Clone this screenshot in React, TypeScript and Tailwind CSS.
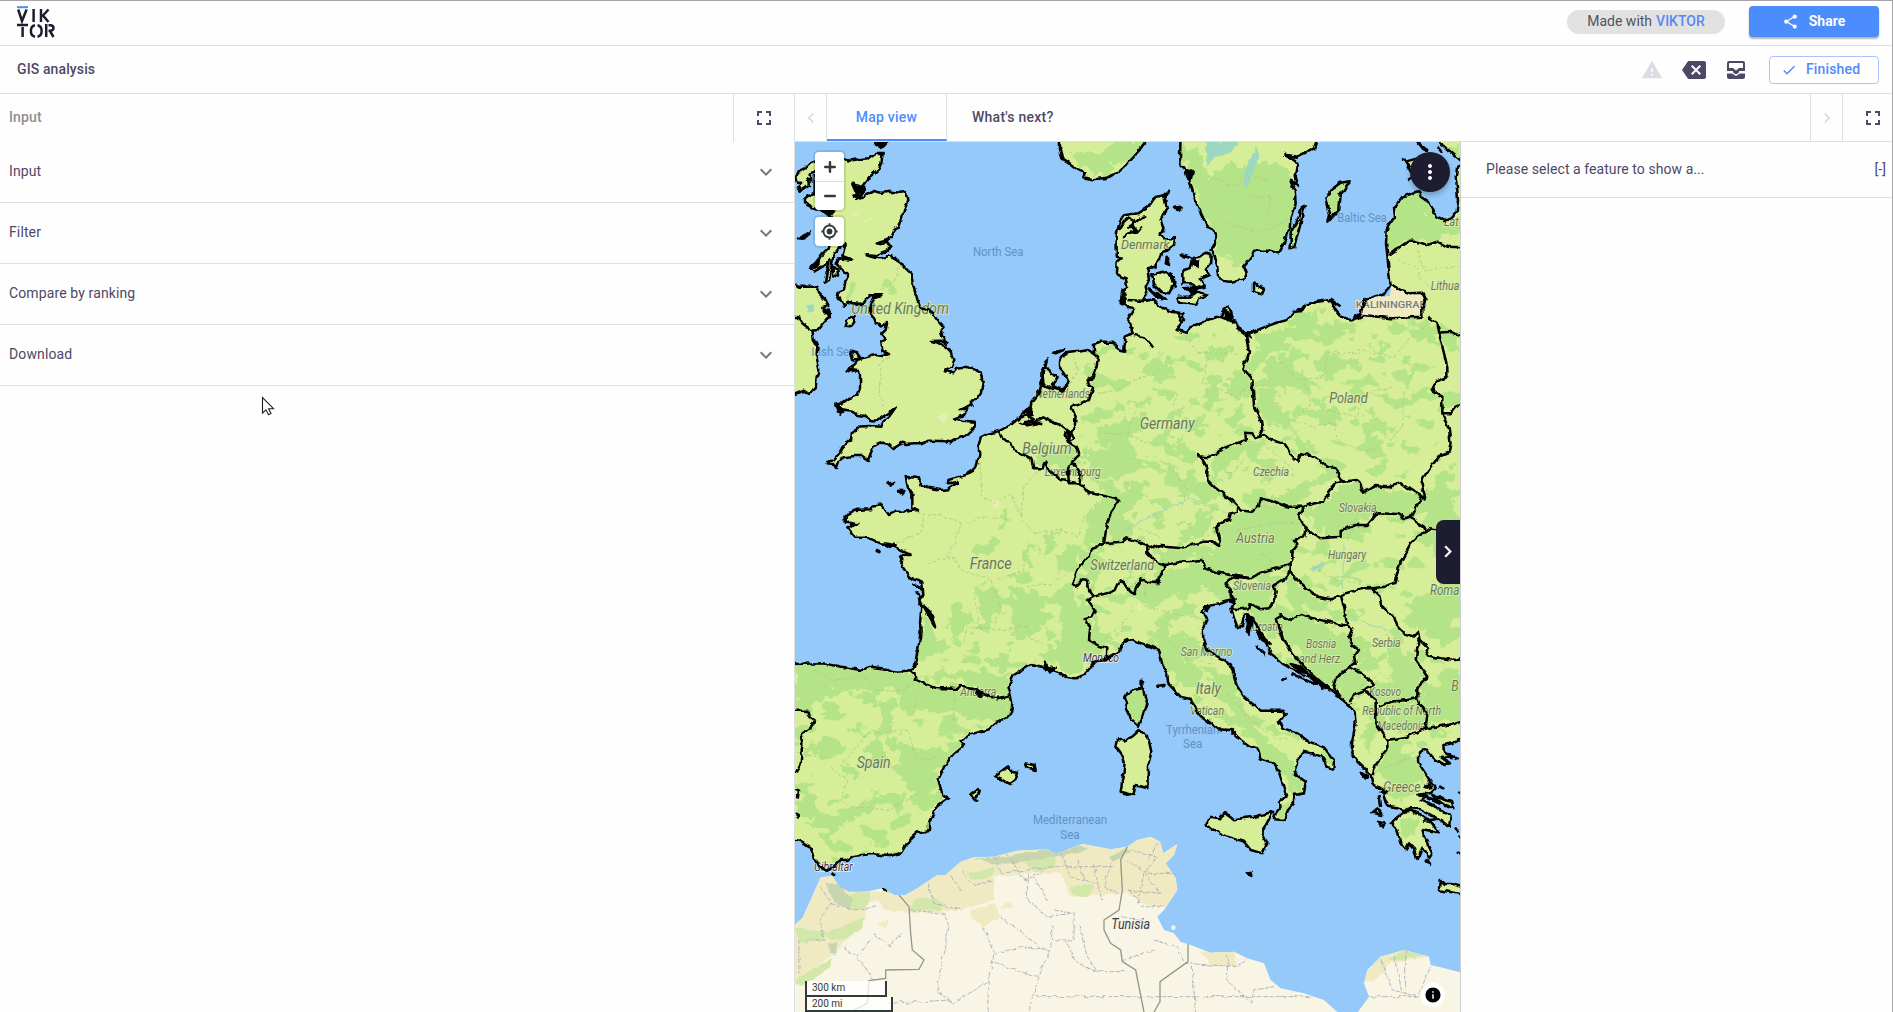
import React from "react";
import { MdShare, MdWarning, MdBackspace, MdFullscreen, MdCheck, MdExpandMore, MdChevronLeft, MdChevronRight, MdMoreVert, MdInfo } from "react-icons/md";

const EUROPE =
  "M2010,70 L1990,80 1985,110 1990,150 1992,185 1988,212 1970,235 1950,243 1925,228 1915,205 1908,190 1880,170 1875,152 1850,162 1825,170 1810,190 1800,205 1803,230 1785,255 1778,270 1776,310 1780,345 1783,380 1790,435 1770,462 1712,480 1700,520 1675,542 1640,530 1625,512 1612,485 1640,500 1612,480 1570,485 1535,495 1525,510 1500,512 1480,540 1450,548 1410,562 1370,578 1350,575 1335,568 1325,545 1290,535 1315,540 1312,515 1300,500 1283,515 1285,535 1270,530 1240,540 1230,548 1200,555 1190,560 1180,578 1145,570 1170,540 1165,520 1130,515 1090,495 1080,478 1045,483 1060,460 1055,440 1065,420 1060,385 1085,380 1085,370 1100,355 1105,335 1120,332 1140,315 1143,295 1110,295 1100,285 1108,265 1100,240 1118,205 1112,170 1125,152 1108,166 1085,170 1062,200 1030,220 990,226 978,245 968,285 968,345 980,355 968,365 966,400 982,410 995,415 1000,440 985,450 980,490 1000,500 1020,505 1000,540 1010,550 1015,580 995,590 990,635 970,630 958,605 920,605 900,612 900,640 880,630 850,635 815,640 795,655 795,680 808,695 825,725 805,748 780,740 775,730 788,712 770,700 758,680 748,685 742,735 732,760 712,785 710,800 690,815 680,830 650,855 615,873 580,882 560,892 554,915 556,945 548,975 540,990 520,1003 490,1012 463,1020 462,1030 490,1026 460,1048 440,1050 405,1043 380,1035 375,1015 335,1010 342,1040 355,1060 355,1105 372,1110 325,1115 305,1115 285,1125 262,1093 235,1097 228,1108 180,1110 155,1125 155,1145 190,1150 160,1165 180,1190 215,1190 260,1210 300,1220 320,1230 350,1245 320,1245 325,1260 322,1275 345,1310 385,1330 388,1365 375,1380 382,1400 378,1450 380,1475 372,1530 365,1565 355,1590 310,1595 285,1588 230,1580 200,1590 130,1578 85,1570 -10,1572 -10,2095 25,2105 50,2122 55,2140 62,2165 80,2180 100,2192 120,2180 140,2160 160,2160 178,2148 230,2142 285,2148 320,2140 345,2100 370,2078 405,2070 405,2050 425,2005 465,1975 445,1962 433,1920 450,1880 480,1840 510,1815 500,1805 520,1785 585,1768 600,1752 650,1725 655,1690 650,1665 643,1640 660,1605 710,1572 750,1582 790,1595 820,1612 845,1615 870,1605 905,1565 940,1555 975,1535 990,1503 1010,1498 1060,1515 1095,1530 1105,1575 1120,1600 1122,1630 1155,1665 1165,1675 1190,1680 1220,1728 1270,1768 1310,1770 1340,1800 1360,1815 1390,1825 1400,1855 1440,1870 1455,1900 1465,1930 1478,1970 1455,1985 1460,2000 1445,2020 1440,2038 1470,2040 1482,2010 1500,1990 1500,1965 1530,1960 1535,1925 1500,1900 1510,1865 1530,1835 1550,1840 1585,1850 1600,1880 1618,1888 1620,1860 1600,1835 1590,1822 1545,1805 1510,1780 1470,1765 1455,1745 1475,1722 1465,1712 1400,1712 1350,1670 1330,1640 1310,1575 1280,1555 1240,1530 1228,1495 1226,1470 1240,1440 1225,1415 1240,1395 1275,1390 1300,1380 1325,1378 1312,1405 1320,1435 1332,1465 1345,1450 1350,1425 1365,1420 1385,1450 1410,1495 1430,1540 1465,1570 1490,1585 1540,1600 1600,1642 1640,1675 1670,1700 1682,1720 1685,1750 1675,1800 1672,1840 1690,1865 1710,1885 1730,1905 1735,1930 1765,1950 1775,1985 1785,2000 1830,2010 1850,2005 1880,2008 1920,2030 1940,2040 1965,2060 1970,2030 1950,2015 1920,2000 1880,1980 1900,1970 1870,1965 1912,1958 1925,1945 1900,1910 1875,1870 1875,1840 1895,1825 1915,1850 1945,1875 1965,1870 1940,1850 1975,1855 1950,1835 1948,1815 1975,1810 2010,1790 Z";

const BRITAIN =
  "M62,110 L150,58 165,62 190,58 225,55 245,42 266,42 262,68 255,85 240,100 225,112 205,138 215,142 210,152 188,180 205,172 220,162 240,153 262,158 290,155 320,158 334,156 340,168 343,180 335,200 328,215 322,240 316,262 300,270 292,290 280,300 248,310 268,314 278,305 292,322 278,332 262,338 250,348 218,346 240,353 262,355 285,346 300,353 320,366 332,382 353,402 356,430 362,450 370,478 378,500 395,505 415,520 428,538 448,562 440,570 445,590 458,612 440,602 410,603 435,610 455,620 470,635 478,660 470,680 455,690 478,700 487,683 510,680 540,685 560,700 566,725 562,755 545,780 530,782 533,795 500,810 520,810 510,825 480,835 505,842 545,845 543,860 520,880 510,890 495,893 470,907 445,903 400,902 385,910 360,910 335,912 325,908 300,925 285,912 265,908 240,918 232,935 222,960 205,948 180,948 150,952 132,965 125,985 118,972 98,970 118,960 140,935 150,915 168,905 170,882 185,875 190,860 225,858 262,860 268,845 285,830 305,802 285,818 270,828 250,842 232,840 215,828 190,825 175,815 150,812 132,815 124,795 145,790 165,775 190,765 198,745 198,705 190,690 175,688 158,698 165,685 180,675 195,658 220,650 245,645 265,648 285,642 265,632 262,605 275,600 262,582 275,570 280,545 262,560 245,550 238,530 228,518 228,495 238,472 262,466 230,466 215,478 205,492 178,490 165,485 150,500 145,490 130,470 135,455 150,448 155,420 162,405 140,385 128,372 135,355 175,360 145,348 155,312 130,330 118,350 105,420 92,428 98,400 108,360 95,375 60,395 45,385 65,368 82,345 105,322 112,300 110,230 90,215 60,205 30,190 30,178 45,165 62,160 Z";

const ISLANDS = [
  "M-8,425 L15,440 40,440 70,440 75,460 95,480 103,495 85,500 105,520 108,535 90,545 70,570 55,572 60,600 70,620 68,650 76,690 68,710 65,745 45,762 30,752 -8,768 Z",
  "M3,110 L20,90 45,75 68,62 66,95 50,100 52,125 40,115 45,135 20,152 10,140 25,125 8,125 Z",
  "M798,-10 L798,30 805,55 825,68 850,88 872,100 868,112 895,118 930,115 970,100 990,82 1020,50 1040,25 1065,-10 Z",
  "M1160,-10 L1158,50 1160,75 1172,85 1180,110 1190,130 1200,170 1212,200 1228,235 1245,262 1262,280 1268,292 1262,310 1250,330 1262,345 1270,380 1272,410 1285,422 1310,425 1350,415 1358,400 1350,380 1372,350 1380,332 1425,332 1455,340 1470,310 1478,280 1490,265 1492,240 1505,190 1502,150 1490,125 1512,135 1505,110 1512,75 1500,60 1475,45 1510,50 1530,40 1560,25 1572,-10 Z",
  "M1670,124 L1655,140 1640,165 1636,205 1600,245 1605,225 1594,175 1610,150 1640,128 Z",
  "M1532,198 L1522,240 1500,322 1490,325 1490,280 1510,245 1522,205 Z",
  "M1380,430 L1410,448 1405,464 1380,455 Z",
  "M1165,390 L1190,385 1200,350 1220,345 1240,338 1250,345 1248,370 1235,390 1245,405 1220,415 1230,440 1215,445 1190,430 1165,430 Z",
  "M1075,405 L1105,395 1130,405 1138,435 1125,460 1100,455 1080,435 Z",
  "M1150,470 L1185,470 1210,455 1240,463 1215,475 1205,495 1180,492 1155,488 Z",
  "M1140,204 L1160,200 1155,210 Z",
  "M1118,350 L1125,375 1115,370 Z",
  "M1740,-10 L1930,-10 1945,15 2010,70 2010,-10 Z",
  "M1835,65 L1870,55 1890,50 1870,85 1850,95 Z",
  "M1830,2015 L1800,2040 1790,2048 1810,2070 1820,2110 1835,2130 1845,2110 1860,2125 1870,2160 1885,2120 1905,2155 1915,2140 1890,2090 1885,2070 1935,2080 1920,2060 1910,2045 1880,2025 1850,2012 Z",
  "M1240,2040 L1250,2030 1275,2035 1295,2018 1320,2038 1380,2030 1437,2015 1405,2075 1420,2110 1405,2140 1370,2130 1350,2105 1300,2090 1260,2070 1238,2055 Z",
  "M1043,1622 L1050,1660 1057,1690 1045,1730 1035,1760 1010,1735 995,1705 1000,1690 992,1675 1000,1660 1020,1650 1043,1645 Z",
  "M1037,1770 L1062,1790 1072,1835 1062,1880 1060,1945 1025,1935 1018,1965 980,1955 985,1920 992,1870 985,1845 967,1820 972,1795 990,1802 1015,1790 Z",
  "M603,1908 L640,1880 650,1892 672,1895 665,1920 648,1932 620,1915 Z",
  "M695,1870 L722,1875 725,1890 700,1882 Z",
  "M530,1962 L550,1947 557,1955 540,1975 Z",
  "M1358,2196 L1370,2196 1372,2208 Z",
  "M1935,2250 L1937,2220 1950,2232 1975,2232 2010,2242 2010,2264 Z",
  "M155,560 L160,540 182,528 180,548 168,562 Z",
  "M1915,1965 L1950,1980 1975,1985 1978,2005 1940,1990 Z",
  "M1735,2018 L1750,2005 1762,2025 Z",
  "M1752,2045 L1770,2050 1765,2062 Z",
  "M115,380 L130,385 132,410 118,405 Z",
  "M170,635 L190,640 200,655 178,662 Z",
  "M815,880 L832,875 838,895 822,905 Z",
];

const BORDERS = [
  "M-5,530 L15,532 25,550 38,560 55,572",
  "M900,640 L912,650 908,680 895,712 878,720 882,735 898,742 885,780 840,795 832,800 845,830 842,860 825,880",
  "M690,850 L720,845 745,832 770,845 800,855 820,870 825,880 822,905 845,920 855,945 835,965 822,985 822,1000 825,1030 860,1030 862,1005 850,985 835,965",
  "M615,873 L625,900 650,905 660,930 690,945 712,955 718,985 745,985 755,965 760,985 800,1020 850,1030 870,1040 885,1060 920,1065 975,1080",
  "M975,1080 L955,1110 940,1145 930,1210 895,1225 885,1245 850,1290 835,1330 845,1340 865,1318 882,1320 885,1350 900,1370",
  "M930,1210 L985,1205 1000,1195 1060,1215 1060,1240 1080,1260 1110,1275 1130,1272 1160,1265 1225,1260",
  "M900,1370 L945,1358 965,1350 980,1318 1000,1345 1020,1365 1025,1345 1040,1315 1060,1325 1090,1330 1095,1310 1110,1290 1110,1275",
  "M900,1370 L882,1380 905,1412 895,1432 872,1438 888,1465 885,1500 915,1518 940,1525 938,1555",
  "M1060,1215 L1075,1225 1100,1215 1115,1220 1160,1225 1230,1205 1260,1205 1275,1218 1280,1205 1265,1165 1275,1150 1305,1140 1310,1120 1328,1115 1330,1100",
  "M1225,1260 L1235,1285 1260,1295 1310,1305 1370,1315 1400,1298 1480,1275 1490,1270",
  "M1330,1100 L1310,1080 1260,1040 1240,1020 1240,985 1222,955 1210,948 1240,952 1270,940 1290,925 1355,900 1355,878 1375,880 1385,895 1410,885 1430,900 1470,910 1480,925 1490,945 1510,965 1520,940 1545,945 1575,960 1600,980 1625,985 1640,1020 1650,1025",
  "M1330,1100 L1345,1112 1375,1115 1395,1095 1400,1075 1440,1085 1480,1100 1530,1100 1560,1090 1590,1085 1605,1055 1625,1030 1650,1025",
  "M1650,1025 L1690,1020 1710,1058 1745,1038 1780,1042 1820,1030 1850,1050 1885,1070 1895,1075 1880,1025 1910,980 1940,945 1965,935 1970,910 1965,870 1945,820 1945,770 1912,750 1925,725 1960,710 1960,680 1940,600 1930,550 1900,530",
  "M1530,1100 L1515,1130 1535,1165 1530,1190 1500,1200 1510,1215 1495,1235 1495,1262 1490,1270",
  "M1535,1165 L1560,1185 1580,1195 1640,1190 1640,1170 1685,1155 1720,1155 1750,1120 1810,1122 1830,1135 1850,1130 1875,1085 1885,1070",
  "M1850,1130 L1865,1145 1890,1160 1895,1175 1870,1190 1850,1210 1820,1265 1800,1330 1770,1340 1735,1345 1700,1345 1640,1365 1610,1378 1570,1370 1545,1350 1510,1320 1490,1290 1490,1270",
  "M1490,1290 L1470,1322 1440,1335 1445,1355 1440,1380 1425,1405 1400,1408 1370,1390 1365,1405 1335,1408 1312,1405",
  "M1370,1315 L1320,1310 1295,1330 1310,1345 1310,1370 1325,1378",
  "M1640,1365 L1650,1400 1655,1430 1660,1458 1580,1440 1555,1435 1520,1425 1490,1440 1460,1425 1445,1435 1455,1470 1470,1500 1495,1540 1530,1580 1580,1625 1630,1665",
  "M1660,1458 L1675,1465 1665,1490 1675,1515 1695,1530 1680,1550 1685,1570 1665,1580 1650,1595 1625,1615 1618,1640 1640,1670",
  "M1665,1580 L1700,1600 1740,1630 1730,1640 1710,1650 1685,1660 1670,1690",
  "M1710,1650 L1745,1680 1745,1705 1748,1755 1780,1800 1780,1830 1760,1855 1745,1875 1735,1905",
  "M1780,1800 L1840,1790 1860,1780 1895,1765 1960,1755 2010,1740",
  "M1755,1700 L1790,1685 1840,1680 1870,1675 1875,1690 1900,1720 1895,1765",
  "M1735,1345 L1760,1370 1765,1400 1800,1430 1810,1460 1830,1480 1860,1490 1875,1475 1880,1500 1870,1520 1865,1560 1900,1610 1870,1640 1870,1675",
  "M1880,1500 L1905,1525 1895,1545 1940,1555 1985,1560 2010,1550",
  "M1895,1175 L1910,1165 1940,1170",
  "M350,1592 L370,1610 365,1620 400,1635 430,1645 455,1645 490,1648 500,1635 530,1645 560,1655 585,1670 610,1675 650,1665",
  "M-5,1712 L40,1712 45,1730 65,1745 45,1765 20,1785 25,1810 20,1870 5,1900",
  "M1020,585 L1050,592 1075,622",
  "M1080,478 L1050,483 1000,480",
  "M1785,345 L1805,330 1840,305 1870,305 1900,315 1930,305 1960,320 2010,322",
  "M1795,435 L1820,450 1850,460 1885,458 1895,480 1885,500 1885,530 1790,535 1710,525 1675,542",
  "M1935,578 L1970,575 1990,585 2010,575",
  "M1945,820 L1970,820 1990,795 2010,790",
  "M1370,578 L1355,582 1360,610 1365,640 1345,685 1375,720 1380,800 1400,840 1405,870 1395,890",
  "M5,1950 L15,1955 10,1975 M5,2020 L15,2025 10,2035",
  "M975,270 L990,245 1005,232 1020,240 1012,262 1025,275 1000,280 985,290",
  "M1000,265 L1040,235 1060,232 M1010,250 L1030,275 1040,262",
  "M680,832 L700,825 720,835 705,842 730,850 700,856 675,848 M700,815 L712,822 700,830 M715,845 L745,850",
  "M1520,1582 L1545,1605 M1500,1588 L1535,1610 M1495,1602 L1530,1618 1570,1635 M1540,1605 L1590,1645",
  "M745,685 L748,735 775,745 800,752 822,735",
];

const BLOTS = [
  "M240,10 L280,8 262,25 Z",
  "M15,295 L50,278 30,296 Z",
  "M175,130 L215,145 180,168 195,175 Z",
  "M60,205 L115,215 110,222 Z",
  "M55,385 L75,362 72,378 Z",
  "M85,505 L105,510 108,525 90,518 Z",
  "M778,638 L808,630 785,640 Z",
  "M752,668 L762,658 755,684 Z",
  "M690,818 L710,808 716,822 Z",
  "M985,455 L996,470 988,492 Z",
  "M1065,445 L1090,460 1115,480 1095,475 Z",
  "M1195,360 L1212,362 1208,382 Z",
  "M1128,400 L1142,408 1145,440 Z",
  "M1160,345 L1192,355 Z M1170,445 L1200,462 1215,442 Z",
  "M1180,88 L1196,92 1190,120 Z",
  "M1150,520 L1163,540 Z",
  "M1290,512 L1308,522 1316,545 1298,538 Z M1330,568 L1370,595 Z",
  "M130,795 L150,812 140,822 Z M284,1030 L298,1028 290,1037 Z M312,1052 L328,1053 322,1060 Z",
  "M165,1145 L185,1150 172,1163 Z M248,1230 L260,1235 Z M270,1210 L305,1215 290,1222 Z",
  "M358,1333 L382,1345 Z M368,1358 L386,1370 Z",
  "M388,1397 L408,1415 424,1462 412,1440 Z",
  "M750,1565 L756,1588 782,1582 768,1594 Z",
  "M545,1657 L565,1658 558,1668 Z",
  "M540,1978 L550,1984 Z M115,2202 L121,2206 Z M267,2247 L273,2250 Z",
  "M1090,1640 L1112,1638 Z",
  "M1230,1402 L1246,1400 1237,1412 Z M1305,1380 L1324,1382 1322,1390 Z",
  "M1360,1425 L1378,1435 1366,1484 1358,1465 Z M1385,1472 L1430,1512 1405,1500 Z M1387,1517 L1412,1543 Z",
  "M1465,1620 L1478,1616 Z M1490,1572 L1520,1580 1525,1592 Z M1560,1620 L1600,1640 1575,1634 Z",
  "M1700,1898 L1722,1908 1715,1916 Z M1760,1957 L1780,1957 Z M1755,1972 L1758,1998 Z",
  "M1893,1937 L1908,1933 1912,1945 Z M1935,1940 L1948,1945 Z M1880,1966 L1920,1978 1955,1998 Z",
  "M1925,1858 L1955,1876 Z M1965,1842 L1988,1858 Z M1898,2160 L1908,2174 Z",
  "M1985,2065 L1992,2073 Z M1988,2138 L1998,2140 Z M1995,1955 L2001,1962 Z M1995,2090 L2001,2093 Z M1890,2042 L1925,2038 Z",
  "M1870,8 L1900,30 1885,28 Z M1930,20 L1945,38 Z M1830,60 L1848,78 Z M1845,120 L1853,112 Z",
  "M1475,45 L1505,50 Z M1492,122 L1508,130 Z",
];

const FORESTS = [
  "M845,60 L830,20 900,40 960,6 1065,0 1020,50 930,112 875,100 Z",
  "M1165,0 L1220,60 1240,110 1330,60 1360,95 1440,60 1500,90 1520,260 1470,330 1390,340 1330,380 1255,320 1215,190 1170,80 Z",
  "M1590,175 L1650,120 1645,200 1605,250 Z",
  "M1830,155 L1880,140 1920,225 2001,240 2001,280 1900,290 1830,310 1770,320 1780,250 Z",
  "M1960,5 L2001,5 2001,60 1950,20 Z",
  "M1900,590 L1990,590 2001,640 1960,610 Z M1950,760 L2001,770 2001,800 1955,810 Z",
  "M1370,590 L1500,540 1600,500 1560,560 1620,600 1500,600 1450,640 1380,650 Z",
  "M1410,680 L1500,620 1540,650 1490,690 1590,740 1430,745 Z M1600,540 L1700,560 1680,590 1610,590 Z",
  "M1380,720 L1460,760 1430,790 1500,830 1420,860 1385,800 Z",
  "M1685,870 L1730,810 1800,870 1720,920 Z M1720,600 L1790,620 1760,640 Z M1620,640 L1700,660 1690,690 Z M1800,710 L1850,680 1830,735 Z",
  "M1840,535 L1900,545 1930,610 1870,580 Z M1550,780 L1610,775 1590,810 Z M1480,870 L1570,920 1520,940 Z",
  "M1045,700 L1100,630 1140,690 1080,735 Z M1230,640 L1320,620 1300,660 1240,665 Z M1280,720 L1375,680 1375,780 1310,770 Z",
  "M910,860 L990,820 1040,870 1000,920 920,905 Z M860,950 L1000,900 1040,950 990,1020 880,990 Z M1000,800 L1080,770 1040,830 Z",
  "M1060,900 L1200,920 1210,970 1140,950 Z M1160,850 L1210,810 1240,850 1190,890 Z M1090,960 L1160,1000 1190,1050 1240,1010 1280,1080 1190,1080 1130,1010 Z",
  "M990,1040 L1060,1030 1020,1090 995,1130 1010,1190 945,1210 940,1130 Z M1140,1170 L1240,1120 1260,1160 1200,1200 Z",
  "M925,1020 L965,1020 960,1070 930,1070 Z M900,1090 L970,1075 945,1130 870,1150 Z M885,1140 L930,1120 930,1220 860,1210 Z",
  "M1240,960 L1360,900 1450,900 1350,955 1290,990 1250,1040 Z M1360,1000 L1440,985 1430,1015 Z",
  "M1230,1010 L1320,1080 1340,1105 1290,1080 Z M1400,1080 L1560,1030 1500,1100 Z",
  "M1330,1110 L1400,1085 1520,1105 1535,1160 1500,1240 1480,1285 1400,1310 1330,1310 1240,1295 1215,1260 1120,1265 1080,1230 1150,1230 1270,1215 1280,1160 Z",
  "M1540,1110 L1650,1030 1750,1045 1890,1080 1850,1120 1750,1120 1640,1180 1560,1180 Z",
  "M1890,1050 L1990,1040 2010,1170 1900,1150 1860,1120 Z M1890,1170 L2010,1170 2001,1400 1960,1500 1880,1480 1820,1430 1850,1380 1930,1360 1940,1240 Z",
  "M850,1320 L880,1240 960,1250 920,1300 900,1360 Z",
  "M900,1370 L1000,1340 1230,1270 1310,1320 1290,1370 1190,1345 1080,1395 950,1390 Z M890,1420 L950,1500 940,1550 890,1490 Z",
  "M870,1370 L820,1320 790,1430 780,1520 740,1540 800,1600 850,1610 930,1540 880,1480 Z",
  "M670,1340 L750,1360 740,1450 680,1500 650,1470 Z M525,1345 L625,1350 615,1450 565,1455 560,1390 Z",
  "M450,1440 L510,1400 540,1450 490,1490 Z M385,1390 L430,1480 480,1510 390,1560 370,1550 Z",
  "M530,1220 L580,1180 615,1195 605,1250 550,1250 Z M695,1230 L725,1210 725,1275 700,1275 Z M730,1215 L785,1160 790,1230 750,1255 Z M605,1125 L650,1115 645,1150 620,1155 Z",
  "M790,1245 L860,1210 830,1300 Z M580,1560 L645,1535 660,1570 620,1595 Z",
  "M380,1600 L510,1590 650,1610 650,1660 Z M-5,1565 L280,1580 400,1630 520,1650 670,1670 650,1730 520,1750 480,1700 350,1710 280,1650 100,1660 80,1700 60,1730 -5,1715 Z",
  "M240,1680 L320,1690 300,1740 250,1735 Z M280,1790 L380,1830 440,1840 510,1770 480,1860 440,1910 400,1980 350,1950 310,1860 Z",
  "M3,1830 L70,1810 100,1840 30,1860 Z M160,1770 L210,1765 190,1785 Z M150,1890 L210,1910 200,1930 Z M230,1780 L275,1785 250,1800 Z",
  "M10,2060 L130,2010 260,1985 225,2030 100,2065 Z M225,2110 L285,2095 275,2125 Z M280,1990 L345,1960 325,2040 Z M90,2160 L155,2140 130,2175 Z",
  "M990,1670 L1045,1640 1060,1690 1035,1760 1000,1720 Z",
  "M1000,1510 L1060,1510 1130,1500 1180,1560 1230,1600 1200,1660 1140,1610 Z M1090,1480 L1180,1480 1260,1550 1190,1565 Z M1260,1630 L1320,1630 1350,1720 1400,1740 1370,1770 1300,1720 Z",
  "M1390,1790 L1450,1830 1510,1880 1500,1960 1465,1910 1400,1860 Z M1450,2010 L1500,1980 1470,2050 Z M1505,1910 L1545,1920 1525,1970 Z",
  "M1315,1340 L1440,1325 1435,1410 1335,1410 Z M1350,1410 L1450,1395 1475,1430 1450,1490 1400,1460 Z M1470,1290 L1540,1350 1620,1400 1560,1415 1480,1380 Z",
  "M1450,1430 L1560,1440 1660,1470 1690,1560 1620,1630 1600,1650 1540,1580 1480,1510 Z M1620,1610 L1680,1580 1730,1640 1660,1700 Z",
  "M1690,1550 L1720,1480 1740,1560 1730,1610 Z M1770,1510 L1870,1550 1895,1610 1865,1640 1880,1685 1750,1685 1740,1640 1800,1620 Z",
  "M1760,1700 L1870,1685 1900,1750 1800,1785 Z M1890,1640 L2010,1590 2010,1750 1910,1760 1890,1700 Z M1700,1760 L1750,1800 1720,1850 Z",
  "M1740,1870 L1800,1820 1860,1840 1890,1900 1830,2000 1780,1960 Z M1820,2030 L1880,2030 1865,2090 1820,2070 Z M1915,1965 L1975,1990 Z",
  "M155,430 L178,425 178,475 155,480 Z M270,450 L305,425 305,465 290,460 Z",
  "M740,925 L850,930 855,970 820,1010 760,990 720,965 Z",
];

const HEATH = [
  "M170,222 L195,215 190,228 Z M205,245 L240,225 215,248 Z",
  "M432,835 L450,818 463,832 445,848 Z",
  "M592,1080 L618,1080 615,1105 600,1108 Z",
  "M1290,725 L1310,720 1308,740 Z M1020,1400 L1035,1390 1040,1410 Z M1650,1215 L1665,1210 1662,1228 Z",
];

const REGIONS = [
  "M320,370 L300,430 260,450 M285,655 L255,670 265,700 255,760 270,800 M370,1120 L440,1125 500,1150 480,1210 460,1250 M390,1120 L380,1180 300,1210 M555,950 L565,1070 600,1090 650,1060 680,1130 720,1180",
  "M680,1130 L690,1040 730,995 M400,1270 L480,1250 500,1290 590,1320 620,1400 600,1460 M510,1510 L520,1460 620,1470 700,1460 710,1500 780,1520 M720,1180 L800,1170 850,1190 870,1130 920,1080 M610,1320 L690,1290 690,1230 M700,1340 L780,1330 830,1290 M520,1150 L560,1130 650,1140",
  "M840,650 L850,690 820,760 M912,760 L970,750 1020,720 1080,700 1130,650 M1030,800 L1000,880 1060,910 M1150,760 L1140,800 1170,820 M1240,660 L1225,730 1330,770 1360,740 M1160,560 L1210,640 1330,640 M930,880 L1000,880",
  "M1100,960 L1150,1010 1180,1050 1160,1110 M1000,1030 L1080,1090 M1020,1160 L1100,1190",
  "M1240,110 L1330,140 1350,110 1420,120 M1250,200 L1300,250 1400,280 1480,240 M1370,170 L1430,170 1420,230",
  "M1450,650 L1510,720 1590,710 1600,640 1700,640 M1690,630 L1800,650 1860,580 1890,560 M1530,730 L1550,790 1500,840 M1600,810 L1690,830 1710,760 1800,740 M1620,850 L1630,900 1690,930 1740,930 M1830,750 L1825,860 1790,900 M1480,840 L1560,860 1620,850",
  "M60,1590 L120,1620 210,1610 250,1650 330,1650 380,1610 M370,1660 L360,1720 M110,1880 L160,1920 140,1980 170,2000 280,2010 370,1960 M140,1880 L220,1780 340,1770 370,1860 430,1850 M480,1640 L480,1760 M10,1840 L120,1860 M540,1370 L560,1470",
  "M1350,950 L1320,1000 1280,990 M1420,920 L1480,970 1500,1010 M1330,1170 L1440,1150 1520,1150 M1400,1240 L1440,1270 M1660,1200 L1690,1120 M1560,1280 L1620,1320 1700,1330 M1050,1320 L1060,1400 1180,1430 1230,1440 M1120,1500 L1180,1560 1260,1570",
  "M1300,1660 L1350,1720 1400,1760 1440,1790 1480,1800 M1020,1410 L985,1450 930,1500 M1700,1640 L1760,1600 1790,1620 1830,1650 M1740,1900 L1830,1860 1870,1850 M1810,360 L1870,380 1880,420 1920,450 M1870,330 L1890,390 1990,380",
];

const AFRICA =
  "M-5,2360 L25,2335 50,2280 80,2212 115,2208 135,2240 165,2255 215,2255 265,2245 300,2265 335,2265 370,2245 430,2205 455,2205 500,2165 540,2152 600,2150 670,2132 760,2128 785,2142 865,2112 950,2128 1000,2120 1030,2100 1070,2090 1098,2105 1108,2140 1150,2112 1140,2145 1115,2170 1145,2215 1150,2250 1110,2310 1090,2330 1110,2370 1140,2380 1160,2405 1190,2415 1250,2438 1320,2435 1360,2455 1410,2470 1430,2520 1460,2545 1530,2560 1590,2580 1640,2625 -5,2625 Z M1685,2625 L1725,2570 1710,2530 1720,2490 1760,2450 1830,2430 1905,2450 1910,2475 1940,2482 2010,2500 2010,2625 Z";

const STEPPE =
  "M-5,2350 L60,2210 120,2200 165,2255 340,2255 450,2190 650,2100 1000,2100 1080,2070 1160,2110 1130,2170 1160,2240 1110,2305 1040,2290 1000,2260 830,2270 800,2200 700,2200 600,2210 600,2280 500,2310 370,2320 270,2310 250,2280 220,2290 210,2340 140,2420 70,2480 -5,2540 Z M530,2310 L600,2290 620,2330 570,2360 535,2340 Z M1220,2435 L1320,2430 1330,2480 1250,2475 Z M1700,2520 L1760,2440 1840,2420 1900,2450 1790,2470 1740,2525 Z M250,2355 L285,2335 275,2360 Z M620,2310 L640,2285 658,2300 Z";

const OASIS =
  "M180,2255 L230,2260 220,2300 180,2310 150,2290 Z M90,2380 L215,2330 200,2370 140,2400 110,2400 Z M520,2200 L610,2180 590,2210 540,2220 Z M3,2360 L50,2375 95,2370 90,2400 20,2410 Z M830,2240 L900,2235 880,2275 835,2265 Z M360,2280 L400,2270 450,2290 440,2310 350,2310 Z M3,2520 L120,2450 100,2490 20,2540 Z M1780,2460 L1830,2430 1890,2445 1830,2458 Z M690,2165 L790,2150 780,2180 720,2200 Z";

const SCRUB =
  "M90,2225 L140,2235 175,2280 170,2310 120,2285 Z M540,2155 L650,2150 760,2125 780,2140 860,2115 880,2130 760,2155 610,2175 Z M945,2150 L1000,2125 1010,2135 960,2165 Z M105,2410 L130,2405 125,2445 110,2440 Z";

const AFRICA_REGIONS =
  "M80,2240 L110,2290 75,2340 95,2400 40,2400 M110,2290 L180,2310 250,2300 M15,2400 L15,2500 M150,2420 L190,2450 240,2520 M190,2450 L230,2400 M240,2380 L290,2420 320,2380 M350,2310 L450,2320 465,2360 440,2480 430,2550 475,2590 585,2525 600,2440 570,2360 M600,2440 L690,2420 770,2430 775,2350 M600,2470 L730,2510 770,2430 M735,2510 L700,2620 M620,2330 L700,2390 740,2425 M785,2400 L840,2400 840,2320 780,2310 M815,2400 L850,2470 910,2495 1000,2495 M855,2360 L880,2450 910,2495 M585,2525 L580,2620 M280,2590 L470,2580 M400,2230 L420,2290 500,2310 M500,2190 L540,2240 600,2220 M600,2150 L620,2200 700,2190 780,2180 860,2180 960,2180 M640,2140 L690,2220 740,2200 M800,2140 L830,2210 900,2230 M850,2160 L870,2220 M700,2200 L700,2280 760,2330 830,2320 M720,2210 L760,2280 M900,2170 L920,2280 M950,2170 L930,2240 975,2260 M470,2210 L500,2250 M1000,2160 L1060,2200 1140,2200 M1010,2130 L1090,2150 1050,2200 1030,2290 M1050,2200 L1100,2260 1000,2250 M985,2330 L1070,2350 M1010,2250 L1040,2300 1110,2300 M1090,2110 L1060,2160 M1080,2400 L1150,2420 1170,2470 M985,2460 L1080,2430 M1195,2480 L1205,2620 M1300,2440 L1300,2520 1370,2590 M1370,2590 L1380,2550 1440,2540 M1170,2470 L1330,2480 1360,2455 M1760,2460 L1795,2550 1870,2570 1910,2480 M1800,2450 L1825,2560 M1835,2430 L1835,2560 M725,2570 L1870,2570";

const AFRICA_BORDERS =
  "M315,2265 L345,2300 350,2380 355,2430 390,2460 375,2488 275,2490 275,2515 225,2522 220,2590 180,2610 M1000,2120 L980,2160 985,2250 975,2310 930,2340 930,2370 950,2410 980,2430 985,2465 1025,2490 1050,2616 M1182,2410 L1182,2465 1098,2525 1098,2585 1080,2616";

type Label = { t: string; x: number; y: number; w: number; s: number; k?: "sea" | "dark" | "caps" };

const LABELS: Label[] = [
  { t: "North Sea", x: 537, y: 347, w: 151, s: 36, k: "sea" },
  { t: "Baltic Sea", x: 1630, y: 246, w: 148, s: 36, k: "sea" },
  { t: "Irish Sea", x: 52, y: 647, w: 132, s: 36, k: "sea" },
  { t: "Tyrrhenian", x: 1116, y: 1781, w: 160, s: 36, k: "sea" },
  { t: "Sea", x: 1167, y: 1824, w: 58, s: 36, k: "sea" },
  { t: "Mediterranean", x: 717, y: 2053, w: 222, s: 36, k: "sea" },
  { t: "Sea", x: 799, y: 2096, w: 58, s: 36, k: "sea" },
  { t: "United Kingdom", x: 172, y: 522, w: 293, s: 48 },
  { t: "Denmark", x: 981, y: 326, w: 146, s: 40 },
  { t: "Netherlands", x: 724, y: 774, w: 164, s: 36 },
  { t: "Belgium", x: 685, y: 942, w: 148, s: 48 },
  { t: "Luxembourg", x: 752, y: 1007, w: 168, s: 36 },
  { t: "Germany", x: 1037, y: 868, w: 165, s: 48 },
  { t: "Poland", x: 1606, y: 788, w: 115, s: 44 },
  { t: "Czechia", x: 1377, y: 1007, w: 108, s: 36 },
  { t: "Slovakia", x: 1634, y: 1115, w: 114, s: 36 },
  { t: "Austria", x: 1326, y: 1209, w: 116, s: 44 },
  { t: "Hungary", x: 1602, y: 1258, w: 114, s: 38 },
  { t: "France", x: 527, y: 1287, w: 126, s: 48 },
  { t: "Switzerland", x: 889, y: 1291, w: 192, s: 44 },
  { t: "Slovenia", x: 1317, y: 1351, w: 114, s: 36 },
  { t: "Croatia", x: 1374, y: 1474, w: 93, s: 36 },
  { t: "Bosnia", x: 1536, y: 1525, w: 90, s: 36 },
  { t: "and Herz.", x: 1516, y: 1570, w: 130, s: 36 },
  { t: "Serbia", x: 1734, y: 1522, w: 86, s: 36 },
  { t: "Kosovo", x: 1725, y: 1668, w: 96, s: 36 },
  { t: "Republic of North", x: 1705, y: 1725, w: 236, s: 36 },
  { t: "Macedonia", x: 1750, y: 1769, w: 145, s: 36 },
  { t: "Greece", x: 1768, y: 1955, w: 112, s: 42 },
  { t: "Roma", x: 1908, y: 1365, w: 88, s: 42 },
  { t: "B", x: 1972, y: 1652, w: 22, s: 42 },
  { t: "Lat", x: 1950, y: 258, w: 44, s: 36 },
  { t: "Lithua", x: 1910, y: 450, w: 86, s: 38 },
  { t: "Monaco", x: 867, y: 1565, w: 108, s: 36, k: "dark" },
  { t: "San Marino", x: 1160, y: 1548, w: 155, s: 36 },
  { t: "Italy", x: 1205, y: 1661, w: 76, s: 50 },
  { t: "Vatican", x: 1188, y: 1724, w: 102, s: 36 },
  { t: "Andorra", x: 499, y: 1669, w: 108, s: 36 },
  { t: "Spain", x: 188, y: 1884, w: 102, s: 50 },
  { t: "Gibraltar", x: 60, y: 2192, w: 116, s: 36, k: "dark" },
  { t: "Tunisia", x: 952, y: 2368, w: 116, s: 46, k: "dark" },
  { t: "KALININGRAD", x: 1685, y: 505, w: 213, s: 26, k: "caps" },
];

const LABEL_STYLES = {
  land: "fill-[#667a52] stroke-[#dcebb4] italic",
  sea: "fill-[#6391c4] stroke-none",
  dark: "fill-[#3c3b52] stroke-[#f4f1e3] italic",
  caps: "fill-[#7d7c78] stroke-[#f3eccb] font-medium",
};

function EuropeMap() {
  return (
    <svg viewBox="3 6 1998 2610" className="block h-[870px] w-[666px]" preserveAspectRatio="none">
      <defs>
        <filter id="coast" x="0" y="0" width="2010" height="2620" filterUnits="userSpaceOnUse">
          <feTurbulence type="fractalNoise" baseFrequency="0.045" numOctaves="2" seed="4" />
          <feDisplacementMap in="SourceGraphic" scale="15" xChannelSelector="R" yChannelSelector="G" />
        </filter>
        <filter id="woods" x="0" y="0" width="2010" height="2620" filterUnits="userSpaceOnUse">
          <feTurbulence type="fractalNoise" baseFrequency="0.022" numOctaves="3" seed="9" />
          <feDisplacementMap in="SourceGraphic" scale="80" xChannelSelector="R" yChannelSelector="G" />
        </filter>
        <filter id="groves" x="0" y="0" width="2010" height="2620" filterUnits="userSpaceOnUse" colorInterpolationFilters="sRGB">
          <feTurbulence type="fractalNoise" baseFrequency="0.014 0.02" numOctaves="3" seed="21" />
          <feColorMatrix type="matrix" values="0 0 0 0 0.706  0 0 0 0 0.894  0 0 0 0 0.529  30 0 0 0 -17.4" result="spots" />
          <feComposite in="spots" in2="SourceGraphic" operator="in" />
        </filter>
        <clipPath id="land">
          <path d={EUROPE} />
          <path d={BRITAIN} />
          {ISLANDS.map((d, i) => <path key={i} d={d} />)}
        </clipPath>
        <clipPath id="africa"><path d={AFRICA} /></clipPath>
      </defs>
      <rect x="0" y="0" width="2010" height="2620" fill="#94c9f9" />

      <path d={AFRICA} fill="#f9f5e5" />
      <g clipPath="url(#africa)">
        <g filter="url(#coast)">
          <path d={STEPPE} fill="#f0eac3" />
          <path d={OASIS} fill="#d2e8aa" />
          <path d={SCRUB} fill="#c8d6af" />
          <path d={AFRICA_REGIONS} fill="none" stroke="#b3b4bd" strokeWidth="3" strokeDasharray="14 4" />
        </g>
        <path d={AFRICA_BORDERS} fill="none" stroke="#92978c" strokeWidth="4" />
      </g>
      <circle cx="1138" cy="2363" r="7" fill="#f9f5e5" />

      <g filter="url(#coast)">
        <g fill="#d5ee97">
          <path d={EUROPE} />
          <path d={BRITAIN} />
          {ISLANDS.map((d, i) => <path key={i} d={d} />)}
        </g>
        <g clipPath="url(#land)">
          <path
            filter="url(#groves)"
            d="M870,620 L1360,560 1900,520 2010,600 2010,2000 1700,2000 1100,1500 860,1600 400,1560 520,1350 880,1200 840,900 Z M0,1560 L650,1680 330,2160 0,2140 Z M1000,1480 L1640,1960 1400,2060 Z"
          />
          <g filter="url(#woods)" fill="#b4e487">
            {FORESTS.map((d, i) => <path key={i} d={d} />)}
          </g>
          <g fill="#e6efb0">{HEATH.map((d, i) => <path key={i} d={d} />)}</g>
          <path d="M1795,430 L1850,460 1885,458 1895,480 1885,530 1790,535 1690,535 1690,490 1720,472 1760,465 Z" fill="#f0eac3" />
          <path d="M1740,470 L1790,435 1792,470 Z" fill="#94c9f9" />
          <path d="M1235,6 L1335,6 1310,40 1265,50 1240,75 Z M1390,20 L1395,50 1360,140 1345,140 1360,70 Z M1545,1288 L1590,1270 1600,1262 1590,1280 1560,1292 Z M40,500 L58,492 60,510 45,518 Z" fill="#9cd8c0" />
          <path d="M990,1170 L1070,1130 1190,1075 1300,1120 M1420,1145 L1480,1145 M1650,1210 L1645,1350 M1670,1430 L1780,1470" fill="none" stroke="#a5d3bd" strokeWidth="3" />
          <g fill="none" stroke="#aec984" strokeWidth="2.6" strokeDasharray="10 6">
            {REGIONS.map((d, i) => <path key={i} d={d} />)}
          </g>
        </g>
      </g>

      {LABELS.map((l, i) => (
        <text
          key={i}
          x={l.x}
          y={l.y}
          fontSize={l.s}
          textLength={l.w}
          lengthAdjust="spacingAndGlyphs"
          strokeWidth="5"
          paintOrder="stroke"
          className={LABEL_STYLES[l.k ?? "land"]}
        >
          {l.t}
        </text>
      ))}

      <g filter="url(#coast)" fill="none" stroke="#000" strokeWidth="7.5" strokeLinejoin="round">
        <path d={EUROPE} />
        <path d={BRITAIN} />
        {ISLANDS.map((d, i) => <path key={i} d={d} />)}
        {BORDERS.map((d, i) => <path key={i} d={d} />)}
        {BLOTS.map((d, i) => <path key={i} d={d} fill="#000" />)}
      </g>
    </svg>
  );
}

function ViktorLogo() {
  return (
    <svg width="40" height="32" viewBox="0 0 40 32" className="block" fill="none" stroke="#1e1c30" strokeWidth="2.5">
      <path d="M1 1.2H12" stroke="#4b8dfa" strokeWidth="2" />
      <path d="M2.2 3.5L6 15L10.6 3.5M17.6 3V16M25 3V16M32.5 3.5L27 9.5L32.5 16" />
      <path d="M1 19H12M6.6 21V31M19 19.300C13.500 20.500 13.500 29.500 19 30.700M21.500 19.300C27 20.500 27 29.500 21.500 30.700M30.200 18V31M32.500 19.200H34.500C38.500 19.500 38.500 24.300 34.500 24.700H32.500M34 25L37.500 31" />
    </svg>
  );
}

const SECTIONS = ["Input", "Filter", "Compare by ranking", "Download"];

export default function App() {
  return (
    <div className="flex h-[1012px] w-[1893px] flex-col overflow-hidden border-t border-r border-[#a5a5a5] bg-[#fefefe] font-['Roboto',sans-serif] text-sm text-[#4d4965]">
      <header className="flex h-[45px] shrink-0 items-center border-b border-[#dfdfe0] pr-[13px] pb-0.5 pl-4">
        <ViktorLogo />
        <div className="ml-auto flex h-6 w-[158px] items-center justify-center gap-1 rounded-full bg-[#e2e2e2] pb-0.5 text-[#55525f]">
          <span>Made with</span>
          <span className="font-medium text-[#5b87f5]">VIKTOR</span>
        </div>
        <button className="mb-px ml-6 flex h-[31px] w-[130px] items-center justify-center gap-2.5 rounded bg-[#4b8dfd] pr-px font-bold text-white shadow-[0_2px_2px_rgba(0,0,0,0.3)]">
          <MdShare size={17} />
          <span className="pb-0.5">Share</span>
        </button>
      </header>

      <div className="flex h-12 shrink-0 items-center border-b border-[#dfdfe0] pr-[13px] pl-[17px]">
        <h1 className="pb-0.5 font-medium tracking-[0.12px]">GIS analysis</h1>
        <div className="ml-auto flex items-center">
          <MdWarning size={22} className="text-[#dcdce6]" />
          <MdBackspace size={24} className="ml-[19px] text-[#4d4965]" />
          <svg width="18" height="18" viewBox="0 0 18 18" className="ml-[21px]" fill="#4d4965">
            <path fillRule="evenodd" d="M2 0H16A2 2 0 0 1 18 2V10H12A3 3 0 0 1 6 10H0V2A2 2 0 0 1 2 0ZM2 2V7H6L9 9.500L12 7H16V2Z" />
            <path d="M0 12.500H5L9 15L13 12.500H18V16A2 2 0 0 1 16 18H2A2 2 0 0 1 0 16Z" />
          </svg>
          <div className="ml-6 flex h-7 w-[110px] items-center rounded border border-[#a3c6fc] pl-[11px] font-medium tracking-[0.15px] text-[#5189f8]">
            <MdCheck size={16} />
            <span className="ml-[9px] pb-px">Finished</span>
          </div>
        </div>
      </div>

      <div className="flex min-h-0 flex-1">
        <aside className="w-[795px] shrink-0 border-r border-[#dfdfe0]">
          <div className="flex h-12">
            <div className="flex w-[734px] items-center border-r border-[#dfdfe0] pb-0.5 pl-[9px] font-medium tracking-[0.12px] text-[#8e8e8e]">Input</div>
            <div className="flex flex-1 items-center justify-center"><MdFullscreen size={24} /></div>
          </div>
          {SECTIONS.map((name) => (
            <div key={name} className="flex h-[61px] items-center justify-between border-b border-[#dfdfe0] pr-4 pb-0.5 pl-[9px] tracking-[0.12px]">
              <span>{name}</span>
              <MdExpandMore size={24} className="mt-0.5 text-[#76767a]" />
            </div>
          ))}
        </aside>

        <main className="flex min-w-0 flex-1 flex-col">
          <nav className="flex h-12 shrink-0 border-b border-[#dfdfe0] font-medium tracking-[0.25px]">
            <div className="flex w-8 items-center justify-center border-r border-[#dfdfe0] text-[#dadae4]"><MdChevronLeft size={20} /></div>
            <div className="flex w-[120px] items-center justify-center border-r border-b-2 border-r-[#dfdfe0] border-b-[#4b8dfd] text-[#4b8dfd]">Map view</div>
            <div className="flex items-center pb-0.5 pl-[25px]">What's next?</div>
            <div className="ml-auto flex w-[33px] items-center justify-center border-x border-[#dfdfe0] text-[#dadae4]"><MdChevronRight size={20} /></div>
            <div className="flex w-[49px] items-center justify-end pr-[7px]"><MdFullscreen size={24} /></div>
          </nav>
          <div className="flex min-h-0 flex-1">
            <section className="relative w-[665px] shrink-0 overflow-hidden">
              <EuropeMap />
              <div className="absolute top-2.5 left-5 w-[29px] rounded bg-white text-[#333b38] shadow-[0_0_0_2px_rgba(0,0,0,0.1)]">
                <div className="flex h-[30px] items-center justify-center border-b border-[#ddd]">
                  <svg width="12" height="12" viewBox="0 0 12 12" stroke="currentColor" strokeWidth="2.400" strokeLinecap="round"><path d="M6 1.200V10.800M1.200 6H10.800" /></svg>
                </div>
                <div className="flex h-7 items-center justify-center">
                  <svg width="12" height="12" viewBox="0 0 12 12" stroke="currentColor" strokeWidth="2.400" strokeLinecap="round"><path d="M1.200 6H10.800" /></svg>
                </div>
              </div>
              <div className="absolute top-[75px] left-5 flex size-[29px] items-center justify-center rounded bg-white text-[#333b38] shadow-[0_0_0_2px_rgba(0,0,0,0.1)]">
                <svg width="17" height="17" viewBox="0 0 17 17" fill="none" stroke="currentColor" strokeWidth="1.800">
                  <circle cx="8.500" cy="8.500" r="6" /><circle cx="8.500" cy="8.500" r="2.900" fill="currentColor" stroke="none" />
                  <path d="M8.500 0.300V3M8.500 14V16.700M0.300 8.500H3M14 8.500H16.700" />
                </svg>
              </div>
              <div className="absolute top-2.5 right-2.5 flex size-10 items-center justify-center rounded-full bg-[#1e1c30] text-white shadow-[0_3px_5px_rgba(0,0,0,0.25)]"><MdMoreVert size={24} /></div>
              <div className="absolute top-[378px] right-0 flex h-16 w-6 items-center justify-center rounded-l-lg bg-[#1e1c30] pb-0.5 text-white">
                <svg width="8" height="13" viewBox="0 0 8 13" fill="none" stroke="currentColor" strokeWidth="2.200"><path d="M1.200 1.200L6.400 6.500L1.200 11.800" /></svg>
              </div>
              <div className="absolute right-[15px] bottom-[5px] flex size-6 items-center justify-center rounded-full bg-white text-black"><MdInfo size={18} /></div>
              <div className="absolute bottom-0 left-2.5 text-[10px] leading-[13px] text-[#333b38]">
                <div className="h-4 w-[82px] border-2 border-t-0 border-[#333b38] bg-white/75 pl-[5px]">300 km</div>
                <div className="h-[15px] w-[88px] border-2 border-t-0 border-[#333b38] bg-white/75 pl-[5px]">200 mi</div>
              </div>
            </section>
            <aside className="flex-1 border-l border-[#cfcfd2]">
              <div className="flex h-14 items-center justify-between border-b border-[#dfdfe0] pr-1.5 pb-0.5 pl-[25px] tracking-[0.06px]">
                <span>Please select a feature to show a...</span>
                <span>[-]</span>
              </div>
            </aside>
          </div>
        </main>
      </div>

      <svg width="14" height="20" viewBox="0 0 14 20" className="absolute top-[396px] left-[261px]">
        <path d="M1.500 1.500V17L5 13.800L7.500 18.700L10 17.400L7.600 12.700H12.500Z" fill="#fff" stroke="#1c1c24" strokeWidth="1.100" />
      </svg>
    </div>
  );
}
